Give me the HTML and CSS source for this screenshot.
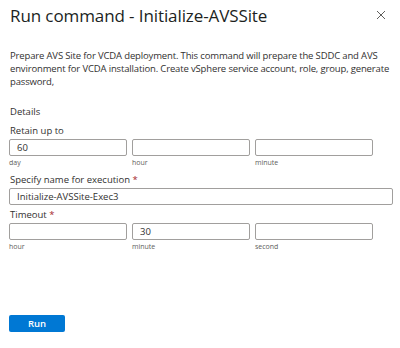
FILE: index.html
```html
<!DOCTYPE html>
<html lang="en">
<head>
  <meta charset="UTF-8">
  <title>Run command</title>
  <link rel="stylesheet" href="styles.css">
</head>
<body>
<div class="panel">
  <div class="header">
    <h1 class="title">Run command - Initialize-AVSSite</h1>
    <button type="button" class="close" aria-label="Close">
      <svg width="10" height="10" viewBox="0 0 10 10"><path d="M1 1L9 9M9 1L1 9" stroke="#605e5c" stroke-width="1"/></svg>
    </button>
  </div>
  <p class="desc">Prepare AVS Site for VCDA deployment. This command will prepare the SDDC and AVS environment for VCDA installation. Create vSphere service account, role, group, generate password,</p>

  <div class="section">Details</div>

  <label class="label">Retain up to</label>
  <div class="triple">
    <div class="cell"><input class="field" type="text" value="60"><span class="hint">day</span></div>
    <div class="cell"><input class="field" type="text"><span class="hint">hour</span></div>
    <div class="cell"><input class="field" type="text"><span class="hint">minute</span></div>
  </div>

  <label class="label name">Specify name for execution <span class="req">*</span></label>
  <input class="field wide" type="text" value="Initialize-AVSSite-Exec3">

  <label class="label timeout">Timeout <span class="req">*</span></label>
  <div class="triple">
    <div class="cell"><input class="field" type="text"><span class="hint">hour</span></div>
    <div class="cell"><input class="field" type="text" value="30"><span class="hint">minute</span></div>
    <div class="cell"><input class="field" type="text"><span class="hint">second</span></div>
  </div>

  <div class="footer">
    <button type="button" class="run">Run</button>
  </div>
</div>
</body>
</html>
```

FILE: styles.css
```css
* {
  box-sizing: border-box;
  font-family: "Segoe UI", "Open Sans", sans-serif;
}
body {
  margin: 0;
  background: #fff;
  color: #323130;
}
.panel {
  padding: 0 7px 0 9px;
}
.header {
  display: flex;
  align-items: center;
  justify-content: space-between;
  height: 30px;
}
.title {
  margin: 0 0 0 1px;
  font-size: 17px;
  font-weight: 400;
  color: #201f1e;
  letter-spacing: -0.1px;
}
.close {
  border: 0;
  background: none;
  padding: 0;
  margin-right: 7px;
  width: 10px;
  height: 10px;
  display: flex;
}
.desc {
  margin: 19px 0 0 1px;
  font-size: 9.5px;
  line-height: 13px;
  letter-spacing: -0.15px;
}
.section {
  margin: 17px 0 0 1px;
  font-size: 9.5px;
  line-height: 13px;
}
.label {
  display: block;
  margin: 6px 0 2px 1px;
  font-size: 9.5px;
  line-height: 13px;
}
.req {
  color: #a4262c;
}
.triple {
  display: grid;
  grid-template-columns: 118px 118px 118px;
  column-gap: 5px;
}
.cell {
  display: flex;
  flex-direction: column;
}
.field {
  height: 17px;
  border: 1px solid #a19f9d;
  border-radius: 2px;
  padding: 0 7px;
  font-size: 9.5px;
  color: #323130;
  outline: none;
}
.wide {
  width: 384px;
  display: block;
}
.hint {
  margin: 2px 0 0 0;
  font-size: 7px;
  line-height: 10px;
  color: #605e5c;
}
.name {
  margin-top: 5px;
}
.timeout {
  margin-top: 3px;
}
.footer {
  margin-top: 58px;
}
.run {
  width: 56px;
  height: 17px;
  border: 0;
  border-radius: 2px;
  background: #0078d4;
  color: #fff;
  font-size: 9.5px;
  font-weight: 600;
  padding: 0;
}
```
